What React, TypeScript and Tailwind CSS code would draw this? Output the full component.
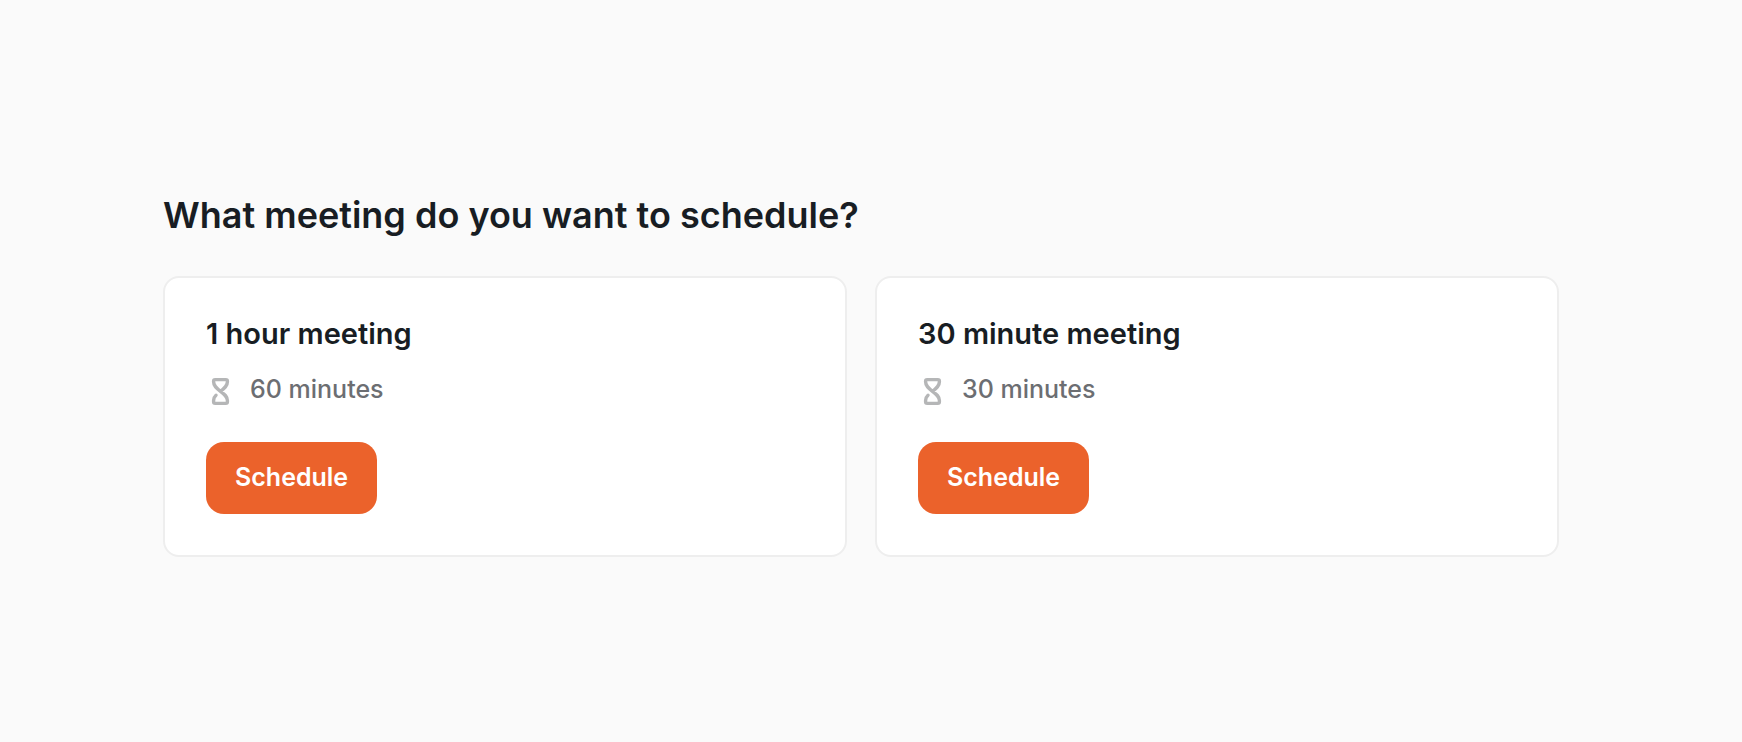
interface Meeting {
  id: string;
  title: string;
  minutes: number;
}

const meetings: Meeting[] = [
  { id: 'hour', title: '1 hour meeting', minutes: 60 },
  { id: 'half-hour', title: '30 minute meeting', minutes: 30 },
];

function HourglassIcon() {
  return (
    <svg
      width="28"
      height="32"
      viewBox="0 0 28 32"
      fill="none"
      stroke="currentColor"
      strokeWidth="3.4"
      strokeLinecap="round"
      strokeLinejoin="round"
      aria-hidden="true"
      className="shrink-0"
    >
      <path d="M10 21.2C8.4 22.6 7.6 24.4 7.6 26.6V27.8Q7.6 29.4 9.2 29.4H19.8Q21.4 29.4 21.4 27.8V26.6C21.4 22.4 18.6 20.4 14.5 17.3C10.4 14.2 7.6 12 7.6 7.8V7.2Q7.6 5.6 9.2 5.6H19.8Q21.4 5.6 21.4 7.2V7.8C21.4 12 18.6 14.2 14.5 17.3" />
    </svg>
  );
}

function MeetingCard({ meeting }: { meeting: Meeting }) {
  return (
    <article className="rounded-2xl border-2 border-[#eeeeee] bg-white px-[41px] pt-9 pb-[41px]">
      <h2 className="text-[29px] leading-10 font-semibold text-[#181d23]">{meeting.title}</h2>
      <div className="mt-5 flex items-start gap-4 text-[#b5b6b7]">
        <HourglassIcon />
        <p className="text-[25px] leading-[30px] font-medium text-[#6c6e72]">{meeting.minutes} minutes</p>
      </div>
      <button
        type="button"
        className="mt-9 cursor-pointer rounded-[18px] bg-[#eb622b] px-[29px] pt-[19px] pb-[21px] text-[25px] leading-8 font-semibold text-white hover:bg-[#d95621]"
      >
        Schedule
      </button>
    </article>
  );
}

export default function App() {
  return (
    <main className="min-h-screen bg-[#fafafa] pt-[193px] pr-[183px] pb-20 pl-[163px] font-['Inter',sans-serif]">
      <h1 className="text-4xl leading-11 font-semibold text-[#181d23]">
        What meeting do you want to schedule?
      </h1>
      <div className="mt-[39px] grid grid-cols-2 gap-7">
        {meetings.map((meeting) => (
          <MeetingCard key={meeting.id} meeting={meeting} />
        ))}
      </div>
    </main>
  );
}
